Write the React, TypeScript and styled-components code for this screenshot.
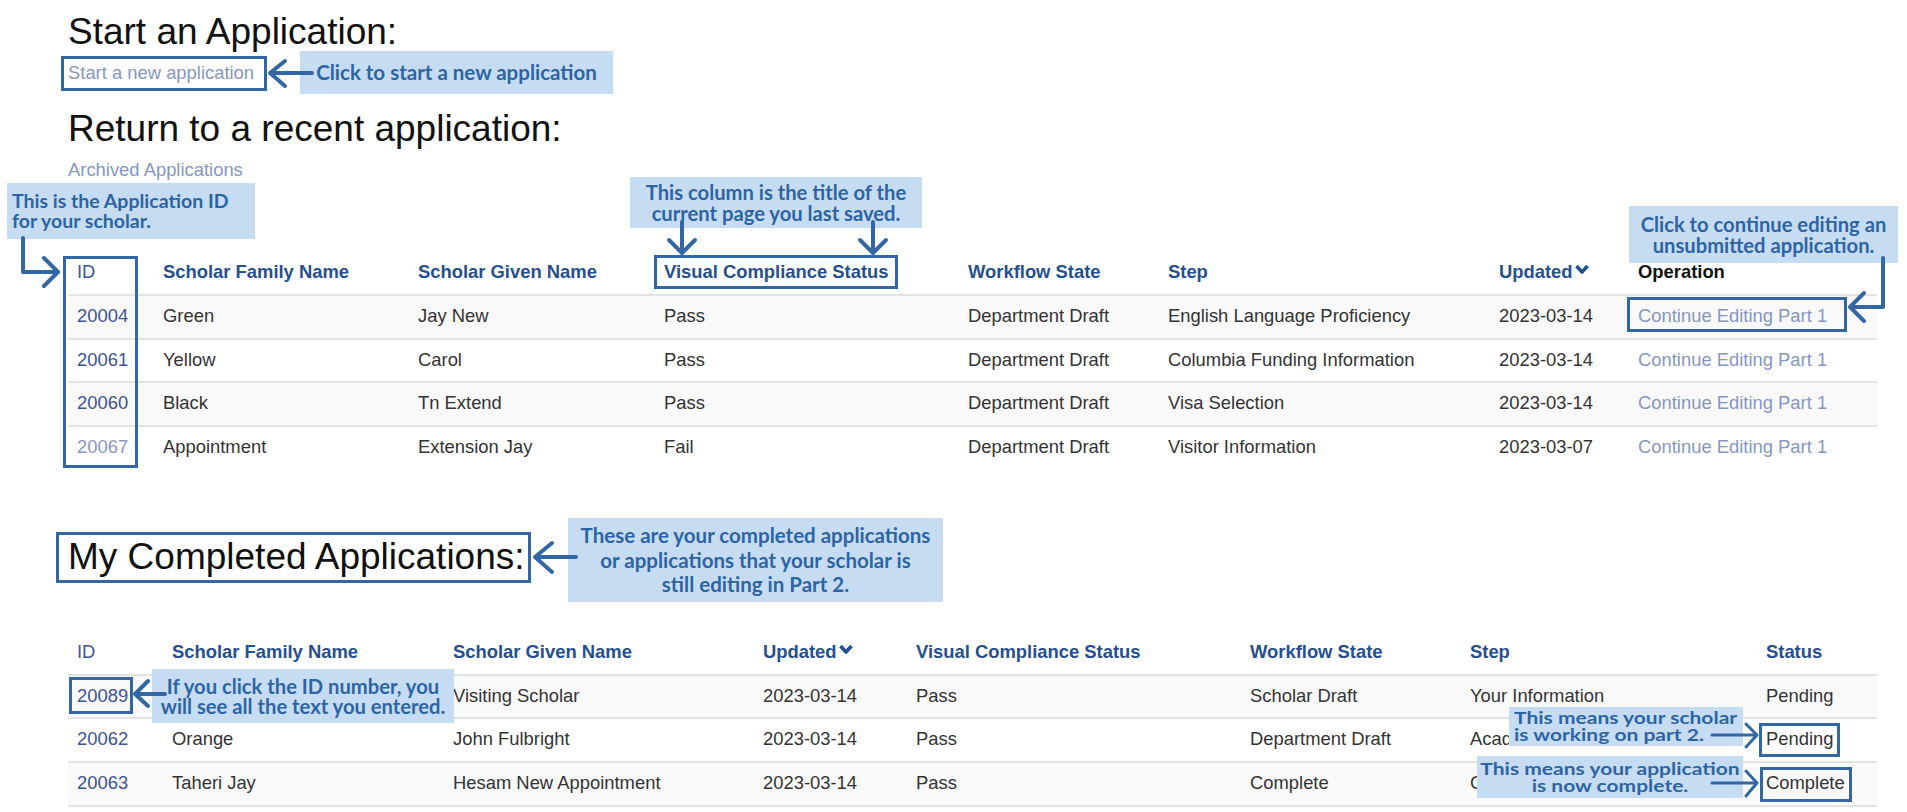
import React from 'react';
import styled, { createGlobalStyle, css } from 'styled-components';

const ink = '#3267a3';

const GlobalStyle = createGlobalStyle`
  html, body {
    margin: 0;
    padding: 0;
    background: #fff;
  }
  body {
    font-family: "Liberation Sans", Arial, sans-serif;
    color: #333;
  }
`;

const Page = styled.div`
  position: relative;
  width: 1907px;
  box-sizing: border-box;
  padding: 12px 30px 0 68px;
`;

const Heading = styled.h2<{ $gap: number }>`
  margin: ${({ $gap }) => $gap}px 0 0;
  font-size: 37px;
  line-height: 40px;
  font-weight: 400;
  color: #111;
`;

const LinkRow = styled.div<{ $gap: number }>`
  margin-top: ${({ $gap }) => $gap}px;
  font-size: 18.4px;
  line-height: 24px;
`;

const SoftLink = styled.a`
  color: #8597c0;
  text-decoration: none;
`;

const Table = styled.table<{ $gap: number; $closed?: boolean }>`
  margin-top: ${({ $gap }) => $gap}px;
  width: 1809px;
  table-layout: fixed;
  border-collapse: separate;
  border-spacing: 0;
  font-size: 18.4px;
  line-height: 24px;

  tbody tr:nth-child(odd) td {
    background: #f9f9f9;
  }
  tbody tr + tr td {
    border-top: 2px solid #e3e3e3;
  }
  ${({ $closed }) =>
    $closed &&
    css`
      tbody tr:last-child td {
        border-bottom: 2px solid #e3e3e3;
      }
    `}
`;

const Th = styled.th<{ $plain?: boolean; $light?: boolean }>`
  text-align: left;
  font-weight: ${({ $light }) => ($light ? 400 : 700)};
  color: ${({ $plain, $light }) => ($plain ? '#111' : $light ? '#3e5493' : '#25508f')};
  padding: 10px 9px;
  border-bottom: 2px solid #e3e3e3;
  white-space: nowrap;
`;

const Td = styled.td`
  padding: 8px 9px 9.6px;
  white-space: nowrap;
  overflow: hidden;
  color: #333;
`;

const IdLink = styled.a<{ $visited?: boolean }>`
  color: ${({ $visited }) => ($visited ? '#8d96c2' : '#3e5493')};
  text-decoration: none;
`;

const Chevron = styled.svg`
  width: 16px;
  height: 10px;
  vertical-align: 4px;
  margin-left: 1px;
`;

const Callout = styled.div<{
  $x: number;
  $y: number;
  $w: number;
  $h: number;
  $align?: 'left' | 'center';
  $size?: number;
  $lead?: number;
  $squash?: boolean;
}>`
  position: absolute;
  left: ${({ $x }) => $x}px;
  top: ${({ $y }) => $y}px;
  width: ${({ $w }) => $w}px;
  height: ${({ $h }) => $h}px;
  box-sizing: border-box;
  display: flex;
  flex-direction: column;
  justify-content: center;
  align-items: ${({ $align }) => ($align === 'left' ? 'flex-start' : 'center')};
  text-align: ${({ $align }) => $align ?? 'center'};
  padding: 0 5px;
  background: #c5dcf3;
  color: #2d64a3;
  font-family: Lato, "Open Sans", sans-serif;
  font-weight: 700;
  font-size: ${({ $size }) => $size ?? 20.2}px;
  line-height: ${({ $lead }) => $lead ?? 20.5}px;
  white-space: nowrap;

  span {
    display: block;
    ${({ $squash }) =>
      $squash &&
      css`
        transform: scaleY(0.8);
      `}
  }
`;

const Frame = styled.div<{ $x: number; $y: number; $w: number; $h: number }>`
  position: absolute;
  left: ${({ $x }) => $x}px;
  top: ${({ $y }) => $y}px;
  width: ${({ $w }) => $w}px;
  height: ${({ $h }) => $h}px;
  box-sizing: border-box;
  border: 3px solid ${ink};
`;

const ArrowLayer = styled.svg`
  position: absolute;
  left: 0;
  top: 0;
  width: 1907px;
  height: 812px;
  pointer-events: none;
  fill: none;
  stroke: ${ink};
  stroke-width: 4;
  stroke-linecap: round;
  stroke-linejoin: round;
`;

const recentCols = [86, 255, 246, 304, 200, 331, 139, 248];
const doneCols = [95, 281, 310, 153, 334, 220, 296, 120];

const recent = [
  { id: '20004', family: 'Green', given: 'Jay New', vcs: 'Pass', state: 'Department Draft', step: 'English Language Proficiency', updated: '2023-03-14' },
  { id: '20061', family: 'Yellow', given: 'Carol', vcs: 'Pass', state: 'Department Draft', step: 'Columbia Funding Information', updated: '2023-03-14' },
  { id: '20060', family: 'Black', given: 'Tn Extend', vcs: 'Pass', state: 'Department Draft', step: 'Visa Selection', updated: '2023-03-14' },
  { id: '20067', family: 'Appointment', given: 'Extension Jay', vcs: 'Fail', state: 'Department Draft', step: 'Visitor Information', updated: '2023-03-07', visited: true },
];

// parts of these rows sit under the callouts in the reference
const completed = [
  { id: '20089', family: '', given: 'Visiting Scholar', updated: '2023-03-14', vcs: 'Pass', state: 'Scholar Draft', step: 'Your Information', status: 'Pending' },
  { id: '20062', family: 'Orange', given: 'John Fulbright', updated: '2023-03-14', vcs: 'Pass', state: 'Department Draft', step: 'Acad', status: 'Pending' },
  { id: '20063', family: 'Taheri Jay', given: 'Hesam New Appointment', updated: '2023-03-14', vcs: 'Pass', state: 'Complete', step: 'C', status: 'Complete' },
];

const SortMark = () => (
  <Chevron viewBox="0 0 16 10">
    <polyline points="2.5,2 8,8 13.5,2" fill="none" stroke="#25508f" strokeWidth="3.6" strokeLinejoin="round" />
  </Chevron>
);

const Cols = ({ widths }: { widths: number[] }) => (
  <colgroup>
    {widths.map((w, i) => (
      <col key={i} style={{ width: w }} />
    ))}
  </colgroup>
);

export default function App() {
  return (
    <>
      <GlobalStyle />
      <Page>
        <Heading $gap={0}>Start an Application:</Heading>
        <LinkRow $gap={9}>
          <SoftLink href="#">Start a new application</SoftLink>
        </LinkRow>
        <Heading $gap={23.5}>Return to a recent application:</Heading>
        <LinkRow $gap={9.5}>
          <SoftLink href="#">Archived Applications</SoftLink>
        </LinkRow>

        <Table $gap={68}>
          <Cols widths={recentCols} />
          <thead>
            <tr>
              <Th $light>ID</Th>
              <Th>Scholar Family Name</Th>
              <Th>Scholar Given Name</Th>
              <Th>Visual Compliance Status</Th>
              <Th>Workflow State</Th>
              <Th>Step</Th>
              <Th>
                Updated
                <SortMark />
              </Th>
              <Th $plain>Operation</Th>
            </tr>
          </thead>
          <tbody>
            {recent.map((r) => (
              <tr key={r.id}>
                <Td>
                  <IdLink href="#" $visited={r.visited}>
                    {r.id}
                  </IdLink>
                </Td>
                <Td>{r.family}</Td>
                <Td>{r.given}</Td>
                <Td>{r.vcs}</Td>
                <Td>{r.state}</Td>
                <Td>{r.step}</Td>
                <Td>{r.updated}</Td>
                <Td>
                  <SoftLink href="#">Continue Editing Part 1</SoftLink>
                </Td>
              </tr>
            ))}
          </tbody>
        </Table>

        <Heading $gap={69}>My Completed Applications:</Heading>

        <Table $gap={52.5} $closed>
          <Cols widths={doneCols} />
          <thead>
            <tr>
              <Th $light>ID</Th>
              <Th>Scholar Family Name</Th>
              <Th>Scholar Given Name</Th>
              <Th>
                Updated
                <SortMark />
              </Th>
              <Th>Visual Compliance Status</Th>
              <Th>Workflow State</Th>
              <Th>Step</Th>
              <Th>Status</Th>
            </tr>
          </thead>
          <tbody>
            {completed.map((r) => (
              <tr key={r.id}>
                <Td>
                  <IdLink href="#">{r.id}</IdLink>
                </Td>
                <Td>{r.family}</Td>
                <Td>{r.given}</Td>
                <Td>{r.updated}</Td>
                <Td>{r.vcs}</Td>
                <Td>{r.state}</Td>
                <Td>{r.step}</Td>
                <Td>{r.status}</Td>
              </tr>
            ))}
          </tbody>
        </Table>

        {/* annotation layer */}
        <Callout $x={300} $y={51} $w={313} $h={43} $size={20.5}>
          Click to start a new application
        </Callout>
        <Callout $x={7} $y={183} $w={248} $h={56} $align="left" $size={19.5}>
          <span>This is the Application ID</span>
          <span>for your scholar.</span>
        </Callout>
        <Callout $x={630} $y={177} $w={292} $h={51}>
          <span>This column is the title of the</span>
          <span>current page you last saved.</span>
        </Callout>
        <Callout $x={1629} $y={206} $w={269} $h={57}>
          <span>Click to continue editing an</span>
          <span>unsubmitted application.</span>
        </Callout>
        <Callout $x={568} $y={518} $w={375} $h={84} $size={20.5} $lead={24.5}>
          <span>These are your completed applications</span>
          <span>or applications that your scholar is</span>
          <span>still editing in Part 2.</span>
        </Callout>
        <Callout $x={152} $y={669} $w={302} $h={54}>
          <span>If you click the ID number, you</span>
          <span>will see all the text you entered.</span>
        </Callout>
        <Callout $x={1509} $y={707} $w={234} $h={39} $align="left" $size={21} $lead={16.5} $squash>
          <span>This means your scholar</span>
          <span>is working on part 2.</span>
        </Callout>
        <Callout $x={1477} $y={756} $w={266} $h={42} $size={21} $lead={17} $squash>
          <span>This means your application</span>
          <span>is now complete.</span>
        </Callout>

        <Frame $x={61} $y={56} $w={206} $h={35} />
        <Frame $x={63} $y={256} $w={75} $h={212} />
        <Frame $x={654} $y={255} $w={244} $h={34} />
        <Frame $x={1627} $y={297} $w={220} $h={35} />
        <Frame $x={56} $y={532} $w={475} $h={51} />
        <Frame $x={69} $y={677} $w={64} $h={37} />
        <Frame $x={1759} $y={723} $w={81} $h={34} />
        <Frame $x={1760} $y={767} $w={92} $h={35} />

        <ArrowLayer viewBox="0 0 1907 812">
          <path d="M312 73 H272 M285 61 L270 73 L285 86" />
          <path d="M23 238 V272 H56 M44 258 L58 272 L44 286" />
          <path d="M682 222 V252 M669 240 L682 253 L695 240" />
          <path d="M873 222 V252 M860 240 L873 253 L886 240" />
          <path d="M1883 258 V307 H1850 M1864 293 L1850 307 L1864 321" />
          <path d="M576 557 H537 M552 543 L535 557 L552 572" />
          <path d="M165 694 H137 M148 681 L135 694 L148 706" />
          <path d="M1712 735 H1755 M1746 724 L1757 735 L1746 747" strokeWidth={3} />
          <path d="M1712 783 H1755 M1746 771 L1757 783 L1746 796" strokeWidth={3} />
        </ArrowLayer>
      </Page>
    </>
  );
}
